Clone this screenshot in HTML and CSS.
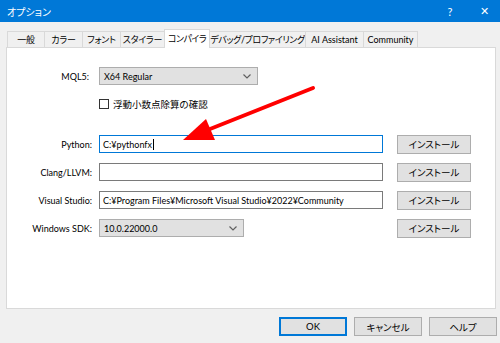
FILE: index.html
```html
<!DOCTYPE html>
<html lang="ja">
<head>
<meta charset="utf-8">
<link rel="stylesheet" href="styles.css">
</head>
<body>
<div class="window">
  <div class="titlebar">
    <span class="title">オプション</span>
    <span class="tb-actions"><span class="tb-help">?</span><span class="tb-close">✕</span></span>
  </div>
  <div class="tabs">
    <div class="tab t1">一般</div>
    <div class="tab t2">カラー</div>
    <div class="tab t3">フォント</div>
    <div class="tab t4">スタイラー</div>
    <div class="tab t5 active">コンパイラ</div>
    <div class="tab t6">デバッグ/プロファイリング</div>
    <div class="tab t7">AI Assistant</div>
    <div class="tab t8">Community</div>
  </div>
  <div class="panel">
    <div class="row row-mql">
      <label class="lbl">MQL5:</label>
      <div class="select sel-mql"><span>X64 Regular</span><svg class="chev" width="8" height="5" viewBox="0 0 8 5"><polyline points="0.5,0.5 4,4 7.5,0.5" fill="none" stroke="#606060" stroke-width="1.2"/></svg></div>
    </div>
    <div class="row row-check">
      <span class="lbl"></span>
      <span class="check"></span><span class="check-label">浮動小数点除算の確認</span>
    </div>
    <div class="row row-py">
      <label class="lbl">Python:</label>
      <div class="input focus">C:¥pythonfx<span class="caret"></span></div>
      <div class="btn">インストール</div>
    </div>
    <div class="row">
      <label class="lbl">Clang/LLVM:</label>
      <div class="input"></div>
      <div class="btn">インストール</div>
    </div>
    <div class="row">
      <label class="lbl">Visual Studio:</label>
      <div class="input">C:¥Program Files¥Microsoft Visual Studio¥2022¥Community</div>
      <div class="btn">インストール</div>
    </div>
    <div class="row">
      <label class="lbl">Windows SDK:</label>
      <div class="select sel-sdk"><span>10.0.22000.0</span><svg class="chev" width="8" height="5" viewBox="0 0 8 5"><polyline points="0.5,0.5 4,4 7.5,0.5" fill="none" stroke="#606060" stroke-width="1.2"/></svg></div>
      <div class="spacer"></div>
      <div class="btn">インストール</div>
    </div>
  </div>
  <div class="footer">
    <div class="btn fbtn ok">OK</div>
    <div class="btn fbtn">キャンセル</div>
    <div class="btn fbtn">ヘルプ</div>
  </div>
  <svg class="arrow" width="500" height="343" viewBox="0 0 500 343">
    <line x1="313" y1="88" x2="200" y2="133" stroke="#ff0000" stroke-width="4" stroke-linecap="round"/>
    <polygon points="183,140 206,119 215,140" fill="#ff0000"/>
  </svg>
</div>
</body>
</html>
```
FILE: styles.css
```css
* { box-sizing: border-box; }
html, body { margin: 0; padding: 0; }
body {
  width: 500px;
  height: 343px;
  overflow: hidden;
  background: #f0f0f0;
  font-family: "Lato", "Noto Sans CJK JP", sans-serif;
  font-feature-settings: "palt";
  font-size: 9.5px;
  color: #000;
}
.window { position: relative; width: 500px; height: 343px; }
.titlebar {
  height: 22px;
  background: #0078d7;
  color: #fff;
  display: flex;
  align-items: center;
  justify-content: space-between;
  padding: 0 0 0 7px;
  font-size: 10px;
}
.tb-actions { display: flex; align-items: center; }
.tb-help { width: 20px; text-align: center; margin-right: 14px; font-size: 11px; }
.tb-close { width: 20px; text-align: center; margin-right: 6px; font-size: 11px; }
.tabs {
  display: flex;
  align-items: flex-end;
  padding-left: 7px;
  margin-top: 7px;
  height: 18px;
  position: relative;
  z-index: 1;
}
.tab {
  height: 16px;
  border: 1px solid #d9d9d9;
  border-bottom: none;
  border-right: none;
  background: #f0f0f0;
  display: flex;
  align-items: center;
  justify-content: center;
  line-height: 1;
  white-space: nowrap;
  font-size: 9px;
  letter-spacing: -0.2px;
  flex: none;
}
.t1 { width: 37px; }
.t2 { width: 38px; }
.t3 { width: 38px; }
.t4 { width: 44px; }
.t5 { width: 46px; letter-spacing: -0.5px; }
.t6 { width: 95px; letter-spacing: -0.4px; }
.t7 { width: 58px; letter-spacing: 0; }
.t8 { width: 55px; letter-spacing: 0; border-right: 1px solid #d9d9d9; }
.tab.active {
  height: 19px;
  margin-bottom: -1px;
  background: #fff;
  border-right: 1px solid #d9d9d9;
  padding-bottom: 2px;
}
.tab.active + .tab { border-left: none; }
.panel {
  margin-left: 6px;
  width: 490px;
  height: 262px;
  background: #fff;
  border: 1px solid #d9d9d9;
  padding-top: 19px;
  display: flex;
  flex-direction: column;
}
.row {
  display: flex;
  align-items: center;
  height: 18px;
  margin-bottom: 10px;
}
.row-mql { margin-bottom: 14px; }
.row-check { height: 10px; margin-bottom: 26px; }
.lbl {
  width: 85px;
  text-align: right;
  margin-right: 7px;
  flex: none;
  font-size: 9px;
}
.row-mql .lbl { width: 82px; margin-right: 10px; }
.select {
  height: 18px;
  background: #e1e1e1;
  border: 1px solid #adadad;
  display: flex;
  align-items: center;
  justify-content: space-between;
  padding: 0 6px 0 4px;
  font-size: 9px;
}
.sel-mql { width: 159px; }
.sel-sdk { width: 145px; }
.spacer { width: 139px; }
.check {
  width: 10px;
  height: 10px;
  border: 1px solid #333;
  background: #fff;
  flex: none;
}
.check-label { margin-left: 4px; }
.input {
  width: 284px;
  height: 18px;
  border: 1px solid #7a7a7a;
  display: flex;
  align-items: center;
  padding: 0 3px;
  white-space: nowrap;
  overflow: hidden;
  font-size: 9px;
}
.input.focus { border-color: #0078d7; }
.caret { display: inline-block; width: 1px; height: 11px; background: #000; margin-left: 1px; }
.btn {
  width: 74px;
  height: 19px;
  background: #e1e1e1;
  border: 1px solid #adadad;
  display: flex;
  align-items: center;
  justify-content: center;
  margin-left: 14px;
}
.footer {
  display: flex;
  justify-content: flex-end;
  padding-right: 3px;
  margin-top: 8px;
  gap: 7px;
}
.fbtn { width: 68px; height: 19px; margin-left: 0; }
.fbtn.ok { border: 2px solid #0078d7; }
.arrow { position: absolute; left: 0; top: 0; pointer-events: none; }
```
